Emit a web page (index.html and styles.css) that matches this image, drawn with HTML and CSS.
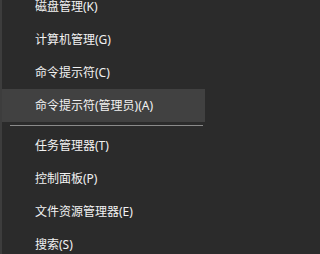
FILE: index.html
```html
<!DOCTYPE html>
<html lang="zh-CN">
<head>
<meta charset="utf-8">
<link rel="stylesheet" href="styles.css">
</head>
<body>
<div class="menu">
  <ul class="group group-top">
    <li class="item">磁盘管理(K)</li>
    <li class="item">计算机管理(G)</li>
    <li class="item">命令提示符(C)</li>
    <li class="item item-hover">命令提示符(管理员)(A)</li>
  </ul>
  <div class="sep"><div class="sep-line"></div></div>
  <ul class="group">
    <li class="item">任务管理器(T)</li>
    <li class="item">控制面板(P)</li>
    <li class="item">文件资源管理器(E)</li>
    <li class="item">搜索(S)</li>
  </ul>
</div>
</body>
</html>
```
FILE: styles.css
```css
html, body {
  margin: 0;
  padding: 0;
  background: #2b2b2b;
  overflow: hidden;
}
.menu {
  width: 205px;
  height: 254px;
  box-sizing: border-box;
  border-left: 2px solid #3d3d3d;
  background: #2b2b2b;
  overflow: hidden;
  font-family: "Noto Sans", "Noto Sans CJK SC", sans-serif;
  font-size: 12px;
  color: #f2f2f2;
}
.group {
  list-style: none;
  margin: 0;
  padding: 0;
}
.group-top {
  margin-top: -10px;
}
.item {
  height: 33px;
  line-height: 33px;
  padding-left: 33px;
  white-space: nowrap;
}
.item-hover {
  background: #414141;
}
.sep {
  height: 7px;
  display: flex;
  align-items: center;
  padding-left: 8px;
  padding-right: 2px;
}
.sep-line {
  flex: 1;
  height: 1px;
  background: #8a8a8a;
}
```
